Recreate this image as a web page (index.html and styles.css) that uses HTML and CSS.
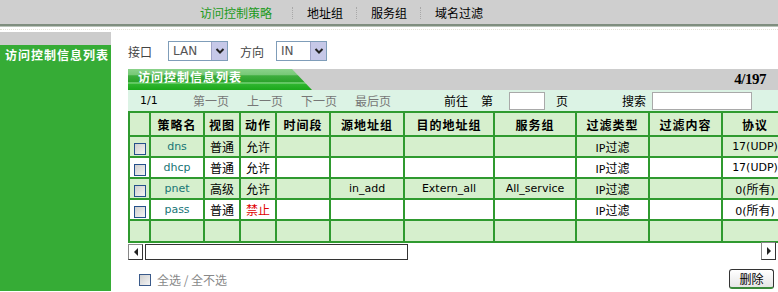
FILE: index.html
```html
<!DOCTYPE html>
<html lang="zh-CN">
<head>
    <meta charset="UTF-8">
    <title>访问控制策略</title>
    <link rel="stylesheet" href="styles.css">
</head>
<body>
    <div class="topbar">
        <ul class="nav">
            <li class="active">访问控制策略</li>
            <li>地址组</li>
            <li>服务组</li>
            <li>域名过滤</li>
        </ul>
    </div>
    <div class="rule"></div>

    <div class="layout">
        <div class="sidebar">
            <div class="side-top"></div>
            <div class="side-title">访问控制信息列表</div>
        </div>

        <div class="main">
            <div class="filter">
                <span class="label">接口</span>
                <div class="select sel-lan"><span class="val">LAN</span><span class="drop"><svg width="10" height="8" viewBox="0 0 10 8"><polyline points="1.5,2 5,5.5 8.5,2" fill="none" stroke="#222" stroke-width="2"/></svg></span></div>
                <span class="label label-dir">方向</span>
                <div class="select sel-in"><span class="val">IN</span><span class="drop"><svg width="10" height="8" viewBox="0 0 10 8"><polyline points="1.5,2 5,5.5 8.5,2" fill="none" stroke="#222" stroke-width="2"/></svg></span></div>
            </div>

            <div class="tabbar">
                <div class="tab">访问控制信息列表</div>
                <div class="count">4/197</div>
            </div>

            <div class="pager">
                <span class="en pg-total">1/1</span>
                <span class="pg-link first">第一页</span>
                <span class="pg-link">上一页</span>
                <span class="pg-link">下一页</span>
                <span class="pg-link">最后页</span>
                <span class="pg-goto">前往</span>
                <span class="pg-di">第</span>
                <span class="box box-page"></span>
                <span class="pg-ye">页</span>
                <span class="pg-search">搜索</span>
                <span class="box box-search"></span>
            </div>

            <div class="grid-wrap">
                <table class="grid">
                    <thead>
                        <tr>
                            <th class="c-chk"></th>
                            <th class="c-name">策略名</th>
                            <th class="c-view">视图</th>
                            <th class="c-act">动作</th>
                            <th class="c-time">时间段</th>
                            <th class="c-src">源地址组</th>
                            <th class="c-dst">目的地址组</th>
                            <th class="c-svc">服务组</th>
                            <th class="c-type">过滤类型</th>
                            <th class="c-cont">过滤内容</th>
                            <th class="c-proto">协议</th>
                        </tr>
                    </thead>
                    <tbody>
                        <tr class="alt">
                            <td><span class="chk"></span></td>
                            <td class="en name">dns</td>
                            <td>普通</td>
                            <td>允许</td>
                            <td></td><td></td><td></td><td></td>
                            <td class="en">IP<span class="cn">过滤</span></td>
                            <td></td>
                            <td class="en">17(UDP)</td>
                        </tr>
                        <tr>
                            <td><span class="chk"></span></td>
                            <td class="en name">dhcp</td>
                            <td>普通</td>
                            <td>允许</td>
                            <td></td><td></td><td></td><td></td>
                            <td class="en">IP<span class="cn">过滤</span></td>
                            <td></td>
                            <td class="en">17(UDP)</td>
                        </tr>
                        <tr class="alt">
                            <td><span class="chk"></span></td>
                            <td class="en name">pnet</td>
                            <td>高级</td>
                            <td>允许</td>
                            <td></td>
                            <td class="en">in_add</td>
                            <td class="en">Extern_all</td>
                            <td class="en">All_service</td>
                            <td class="en">IP<span class="cn">过滤</span></td>
                            <td></td>
                            <td class="en">0(<span class="cn">所有</span>)</td>
                        </tr>
                        <tr>
                            <td><span class="chk"></span></td>
                            <td class="en name">pass</td>
                            <td>普通</td>
                            <td class="deny">禁止</td>
                            <td></td><td></td><td></td><td></td>
                            <td class="en">IP<span class="cn">过滤</span></td>
                            <td></td>
                            <td class="en">0(<span class="cn">所有</span>)</td>
                        </tr>
                        <tr class="alt empty">
                            <td></td><td></td><td></td><td></td><td></td><td></td>
                            <td></td><td></td><td></td><td></td><td></td>
                        </tr>
                    </tbody>
                </table>
            </div>

            <div class="hscroll">
                <span class="sb-btn sb-left"><i></i></span>
                <span class="sb-thumb"></span>
                <span class="sb-btn sb-right"><i></i></span>
            </div>

            <div class="footer">
                <label class="select-all"><span class="chk"></span>全选 / 全不选</label>
                <button class="btn-del">删除</button>
            </div>
        </div>
    </div>
</body>
</html>
```

FILE: styles.css
```css
body {
    margin: 0;
    font-family: "Noto Sans CJK SC", sans-serif;
    font-size: 12px;
    color: #000;
    background: #fff;
}

.en {
    font-family: "DejaVu Sans", "Noto Sans CJK SC", sans-serif;
    font-size: 11px;
}

.en .cn {
    font-family: "Noto Sans CJK SC", sans-serif;
    font-size: 12px;
}

/* top navigation */
.topbar {
    height: 24px;
    background: #cfcfcf;
    border-bottom: 2px solid #7f8e7f;
    box-shadow: 0 1px 0 #b9c3b9;
}

.nav {
    display: flex;
    align-items: center;
    height: 24px;
    margin: 0;
    padding: 2px 0 0 200px;
    list-style: none;
    box-sizing: border-box;
}

.nav li {
    line-height: 12px;
    padding-right: 13px;
}

.nav li + li {
    border-left: 1px dotted #a8a8a8;
    padding-left: 14px;
}

.nav li.active {
    color: #1a9a1a;
    padding-right: 20px;
}

.rule {
    margin-top: 3px;
    border-top: 1px dotted #e2e2d6;
}

/* page body */
.layout {
    display: flex;
    margin-top: 2px;
    height: 259px;
}

.sidebar {
    width: 111px;
    flex: none;
    background: #36ac36;
}

.side-top {
    height: 13px;
    background: #cccccc;
}

.side-title {
    padding: 2px 0 0 5px;
    line-height: 16px;
    color: #fff;
    font-weight: bold;
    letter-spacing: 1px;
}

.main {
    flex: 1;
    padding: 9px 0 0 17px;
    min-width: 0;
}

/* filter row */
.filter {
    display: flex;
    align-items: center;
    height: 20px;
    color: #444;
}

.label-dir {
    margin-left: 12px;
}

.select {
    display: flex;
    height: 20px;
    box-sizing: border-box;
    border: 1px solid #7f9db9;
    background: #fff;
    margin-left: 16px;
}

.sel-lan {
    width: 60px;
}

.sel-in {
    width: 51px;
    margin-left: 12px;
}

.select .val {
    flex: 1;
    padding-left: 4px;
    line-height: 18px;
    font-family: "DejaVu Sans", sans-serif;
    font-size: 12px;
    color: #555;
}

.select .drop {
    width: 15px;
    display: flex;
    align-items: center;
    justify-content: center;
    background: #c6c8e8;
    border-left: 1px solid #a0a4c8;
}

/* tab header */
.tabbar {
    display: flex;
    align-items: center;
    height: 21px;
    margin-top: 8px;
    background: #cdcdcd;
}

.tab {
    width: 184px;
    height: 21px;
    box-sizing: border-box;
    padding: 1px 0 0 10px;
    line-height: 14px;
    color: #fff;
    font-weight: bold;
    letter-spacing: 1px;
    background: linear-gradient(#8ad28a 0, #76c876 28%, #3eae3e 32%, #2aa22a 62%, #8fe08f 66%, #2fb52f 72%, #1aa81a 100%);
    clip-path: polygon(0 0, 164px 0, 100% 100%, 0 100%);
}

.count {
    margin-left: auto;
    padding-right: 12px;
    font-family: "Liberation Serif", serif;
    font-size: 15px;
    font-weight: bold;
    letter-spacing: -0.5px;
}

/* pager */
.pager {
    display: flex;
    align-items: center;
    height: 21px;
    background: #dcf3e5;
}

.pg-total {
    margin-left: 12px;
    width: 53px;
}

.pg-link {
    color: #777;
    margin-right: 18px;
}

.pg-goto {
    margin-left: 35px;
}

.pg-di {
    margin-left: 13px;
}

.box {
    height: 18px;
    box-sizing: border-box;
    border: 1px solid #a9a9a9;
    background: #fff;
}

.box-page {
    width: 36px;
    margin-left: 16px;
}

.pg-ye {
    margin-left: 11px;
}

.box-search {
    width: 100px;
    margin-left: 6px;
}

.pg-search {
    margin-left: 54px;
}

/* table */
.grid-wrap {
    width: 650px;
    overflow: hidden;
}

.grid {
    table-layout: fixed;
    width: 661px;
    border-collapse: separate;
    border-spacing: 0;
    border-left: 2px solid #2f9a2f;
    border-top: 2px solid #2f9a2f;
    background: #fff;
}

.grid th,
.grid td {
    box-sizing: border-box;
    border-right: 2px solid #2f9a2f;
    border-bottom: 2px solid #2f9a2f;
    padding: 0;
    text-align: center;
    white-space: nowrap;
    overflow: hidden;
}

.grid th {
    height: 24px;
    letter-spacing: 1px;
    background: #d6efcd;
}

.grid td {
    height: 21px;
}

.grid tr.alt td {
    background: #d6efcd;
}

.grid tr.empty td {
    height: 22px;
}

.c-chk { width: 21px; }
.c-name { width: 54px; }
.c-view { width: 36px; }
.c-act { width: 36px; }
.c-time { width: 54px; }
.c-src { width: 74px; }
.c-dst { width: 90px; }
.c-svc { width: 82px; }
.c-type { width: 73px; }
.c-cont { width: 73px; }
.c-proto { width: 66px; }

.grid td.name {
    color: #177575;
}

.grid td.deny {
    color: #e00000;
}

.chk {
    display: inline-block;
    width: 12px;
    height: 12px;
    box-sizing: border-box;
    border: 1px solid #24508a;
    background: linear-gradient(135deg, #cfcfcf, #f4f4f4);
    vertical-align: middle;
}

/* fake horizontal scrollbar */
.hscroll {
    display: flex;
    height: 17px;
    width: 648px;
}

.sb-btn {
    width: 15px;
    height: 16px;
    box-sizing: border-box;
    border: 1px solid #888;
    border-right-color: #333;
    border-bottom-color: #333;
    background: #fff;
    display: flex;
    align-items: center;
    justify-content: center;
    margin-top: 1px;
}

.sb-left i {
    border-right: 4px solid #222;
    border-top: 4px solid transparent;
    border-bottom: 4px solid transparent;
}

.sb-right {
    margin-left: auto;
    margin-top: -1px;
    height: 18px;
}

.sb-right i {
    border-left: 4px solid #222;
    border-top: 4px solid transparent;
    border-bottom: 4px solid transparent;
}

.sb-thumb {
    width: 263px;
    height: 16px;
    box-sizing: border-box;
    margin: 1px 0 0 2px;
    border: 1px solid #333;
    background: #fff;
}

/* footer */
.footer {
    display: flex;
    align-items: center;
    height: 20px;
    margin-top: 9px;
    padding: 0 4px 0 11px;
}

.select-all {
    color: #888;
}

.select-all .chk {
    margin: -2px 6px 0 0;
    border-color: #3a5a8a;
}

.btn-del {
    margin-left: auto;
    width: 45px;
    height: 20px;
    padding: 0;
    font-family: "Noto Sans CJK SC", sans-serif;
    font-size: 12px;
    color: #000;
    border: 1px solid #333;
    border-bottom: 2px solid #3a8a3a;
    border-radius: 3px;
    background: linear-gradient(#fff, #e6e6e6);
}
```
